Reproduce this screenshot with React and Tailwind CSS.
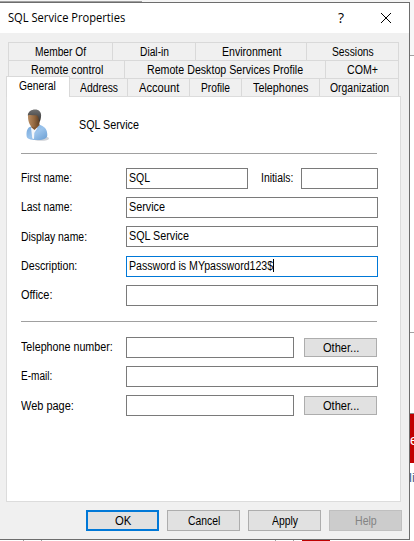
import { useLayoutEffect, useRef, useState } from "react";

// Text condensed horizontally so that it fills exactly w pixels.
function T({ w, children, className = "" }) {
  const ref = useRef(null);
  const [scale, setScale] = useState(1);
  useLayoutEffect(() => {
    setScale(w / ref.current.offsetWidth);
  }, [w]);
  return (
    <span className={"block shrink-0 whitespace-nowrap " + className} style={{ width: w }}>
      <span ref={ref} className="inline-block origin-left" style={{ transform: `scaleX(${scale})` }}>
        {children}
      </span>
    </span>
  );
}

function Tab({ w, tw, children, first }) {
  return (
    <div
      className={
        "flex h-[18px] items-center justify-center border-t border-r border-[#d9d9d9] pt-px " +
        (first ? "border-l" : "")
      }
      style={{ width: w }}
    >
      <T w={tw}>{children}</T>
    </div>
  );
}

function Field({ className = "w-[252px]", focus, children }) {
  return (
    <div
      className={
        "flex h-[21px] shrink-0 items-center border pb-[2px] pl-[2px] " +
        (focus ? "border-[#0078d7] " : "border-[#7a7a7a] ") +
        className
      }
    >
      {children}
      {focus && <span className="h-[13px] w-px bg-black" />}
    </div>
  );
}

function Row({ label, lw, children, className = "", low }) {
  return (
    <div className={"flex h-[21px] items-center " + className}>
      <div className={"w-[105px] shrink-0 " + (low ? "" : "pb-[2px]")}>
        <T w={lw}>{label}</T>
      </div>
      {children}
    </div>
  );
}

function Button({ label, tw, className = "" }) {
  return (
    <button type="button" className={"flex w-[73px] shrink-0 items-center justify-center " + className}>
      <T w={tw}>{label}</T>
    </button>
  );
}

const grey = "border border-[#adadad] bg-[#e1e1e1]";

function UserIcon() {
  return (
    <svg width="24" height="33" viewBox="0 0 24 33" className="block">
      <defs>
        <linearGradient id="coat" x1="0" y1="0" x2="1" y2="1">
          <stop offset="0" stopColor="#6fa3d8" />
          <stop offset=".5" stopColor="#9cc4ec" />
          <stop offset="1" stopColor="#6a9ed2" />
        </linearGradient>
        <linearGradient id="face" x1="0" y1="0" x2="1" y2="0">
          <stop offset="0" stopColor="#b88c62" />
          <stop offset=".5" stopColor="#94683f" />
          <stop offset="1" stopColor="#543820" />
        </linearGradient>
        <linearGradient id="hair" x1="0" y1="0" x2="0" y2="1">
          <stop offset="0" stopColor="#707070" />
          <stop offset="1" stopColor="#383838" />
        </linearGradient>
      </defs>
      <ellipse cx="15" cy="29.5" rx="8" ry="2.3" fill="#b9bec4" opacity=".7" />
      <path d="M.8 28C0 23 1 18.5 5 17.5L13 15.5C18 17 21.5 20 21.3 26C21.3 29.5 18 31 12 31C6.5 31 1.5 30.5 .8 28Z" fill="url(#coat)" />
      <path d="M5 18.5L8 17.5L11.5 19L8.3 24L8 30L6.3 29.5Z" fill="#f3f6fa" />
      <path d="M5 15L13 12.5L13.6 16L8.5 21L5.5 18.5Z" fill="#80552f" />
      <path d="M2 7C2 3 5.5 2 9 2C13 2 14.6 5 14.3 10C14 14.5 11 18.5 7.8 18.5C4.5 18.5 1.8 13 2 7Z" fill="url(#face)" />
      <path d="M1.8 6.5C2 2.5 5.5.5 9 .5C13 .5 15.8 3 15 8L14 12L13 12C13 9 12.2 7.2 10.5 6.3C7.5 6.5 4.5 5.3 1.8 6.5Z" fill="url(#hair)" />
    </svg>
  );
}

export default function App() {
  return (
    <div className="relative h-[541px] w-[414px] overflow-hidden bg-white font-['Liberation_Sans',Arial,sans-serif] text-[12px] leading-[14px] text-black">
      {/* slivers of the windows behind the dialog */}
      <div className="absolute top-0 left-0 h-[2px] w-[414px] bg-[#f4f4f4]" />
      <div className="absolute top-px left-0 h-px w-[142px] bg-[#a0a0a0]" />
      <div className="absolute top-0 left-[410px] h-[55px] w-[4px] bg-[#f7f7f7]" />
      <div className="absolute top-[55px] left-[410px] h-px w-[4px] bg-[#a0a0a0]" />
      <div className="absolute top-[332px] left-[410px] h-px w-[4px] bg-[#a0a0a0]" />
      <div className="absolute top-[413px] left-[410px] h-[50px] w-[4px] overflow-hidden border-t border-[#8a8a8a] bg-[#c00000] text-[14px] leading-[52px] text-white">
        e
      </div>
      <div className="absolute top-[470px] left-[409px] w-[5px] overflow-hidden text-[13px] leading-[16px] whitespace-nowrap text-[#3d5f8c]">
        li
      </div>
      <div className="absolute top-[540px] left-[23px] h-px w-[19px] border-x border-[#a0a0a0]" />
      <div className="absolute top-[540px] left-[275px] h-px w-[19px] border-x border-[#a0a0a0]" />
      <div className="absolute top-[540px] left-[302px] h-px w-[28px] bg-[#c00000]" />

      <div className="relative mt-[2px] h-[538px] w-[410px] border-y border-r border-[#6d6d6d] bg-[#f0f0f0]">
        <header className="flex h-[30px] items-center bg-white pb-px pl-[8px] font-['Open_Sans','Noto_Sans',sans-serif]">
          <T w={117}>SQL Service Properties</T>
          <span className="ml-[213px] w-[7px] text-[14px] leading-[16px]">?</span>
          <svg width="10" height="10" viewBox="0 0 10 10" className="ml-[36px]" stroke="#000" strokeWidth="1">
            <path d="M0 0L10 10M10 0L0 10" />
          </svg>
        </header>

        <div className="mt-[9px] ml-[8px] flex">
          <Tab first w={105} tw={51}>Member Of</Tab>
          <Tab w={83} tw={29}>Dial-in</Tab>
          <Tab w={111} tw={59}>Environment</Tab>
          <Tab w={92} tw={42}>Sessions</Tab>
        </div>
        <div className="ml-[8px] flex">
          <Tab first w={117} tw={72}>Remote control</Tab>
          <Tab w={201} tw={156}>Remote Desktop Services Profile</Tab>
          <Tab w={73} tw={31}>COM+</Tab>
        </div>
        <div className="ml-[6px] flex">
          <div className="relative z-10 -mt-[2px] -mb-px flex h-[21px] w-[64px] items-center justify-center border-x border-t border-[#d9d9d9] bg-white pr-[2px] pb-[2px]">
            <T w={37}>General</T>
          </div>
          <Tab w={58} tw={38}>Address</Tab>
          <Tab w={62} tw={40}>Account</Tab>
          <Tab w={52} tw={29}>Profile</Tab>
          <Tab w={78} tw={55}>Telephones</Tab>
          <Tab w={79} tw={59}>Organization</Tab>
        </div>

        <main className="ml-[6px] flex h-[406px] w-[395px] flex-col border border-[#dcdcdc] bg-white pl-[14px]">
          <div className="flex h-[56px] items-start pt-[12px]">
            <div className="ml-[5px] w-[53px]">
              <UserIcon />
            </div>
            <T w={60} className="mt-[9px]">SQL Service</T>
          </div>
          <div className="h-px w-[356px] bg-[#a0a0a0]" />

          <Row label="First name:" lw={51} className="mt-[14px]">
            <Field className="w-[122px]"><T w={21}>SQL</T></Field>
            <T w={32} className="ml-[13px] pb-[2px]">Initials:</T>
            <Field className="ml-[8px] w-[77px]" />
          </Row>
          <Row label="Last name:" lw={51} className="mt-[8px]">
            <Field><T w={36}>Service</T></Field>
          </Row>
          <Row label="Display name:" lw={66} className="mt-[8px]" low>
            <Field><T w={60}>SQL Service</T></Field>
          </Row>
          <Row label="Description:" lw={56} className="mt-[9px]">
            <Field focus><T w={144}>Password is MYpassword123$</T></Field>
          </Row>
          <Row label="Office:" lw={31} className="mt-[8px]">
            <Field />
          </Row>

          <div className="mt-[15px] h-px w-[356px] shrink-0 bg-[#a0a0a0]" />

          <Row label="Telephone number:" lw={92} className="mt-[15px]">
            <Field className="w-[168px]" />
            <Button label="Other..." tw={36} className={"ml-[10px] h-[19px] " + grey} />
          </Row>
          <Row label="E-mail:" lw={31} className="mt-[8px]">
            <Field />
          </Row>
          <Row label="Web page:" lw={53} className="mt-[8px]" low>
            <Field className="w-[168px]" />
            <Button label="Other..." tw={36} className={"ml-[10px] h-[19px] " + grey} />
          </Row>
        </main>

        <footer className="mt-[8px] ml-[86px] flex gap-[8px]">
          <Button label="OK" tw={16} className="h-[21px] border-2 border-[#0078d7] bg-[#e1e1e1]" />
          <Button label="Cancel" tw={32} className={"h-[21px] " + grey} />
          <Button label="Apply" tw={26} className={"h-[21px] " + grey} />
          <Button label="Help" tw={22} className="h-[21px] border border-[#bfbfbf] bg-[#cccccc] text-[#838383]" />
        </footer>
      </div>
    </div>
  );
}
